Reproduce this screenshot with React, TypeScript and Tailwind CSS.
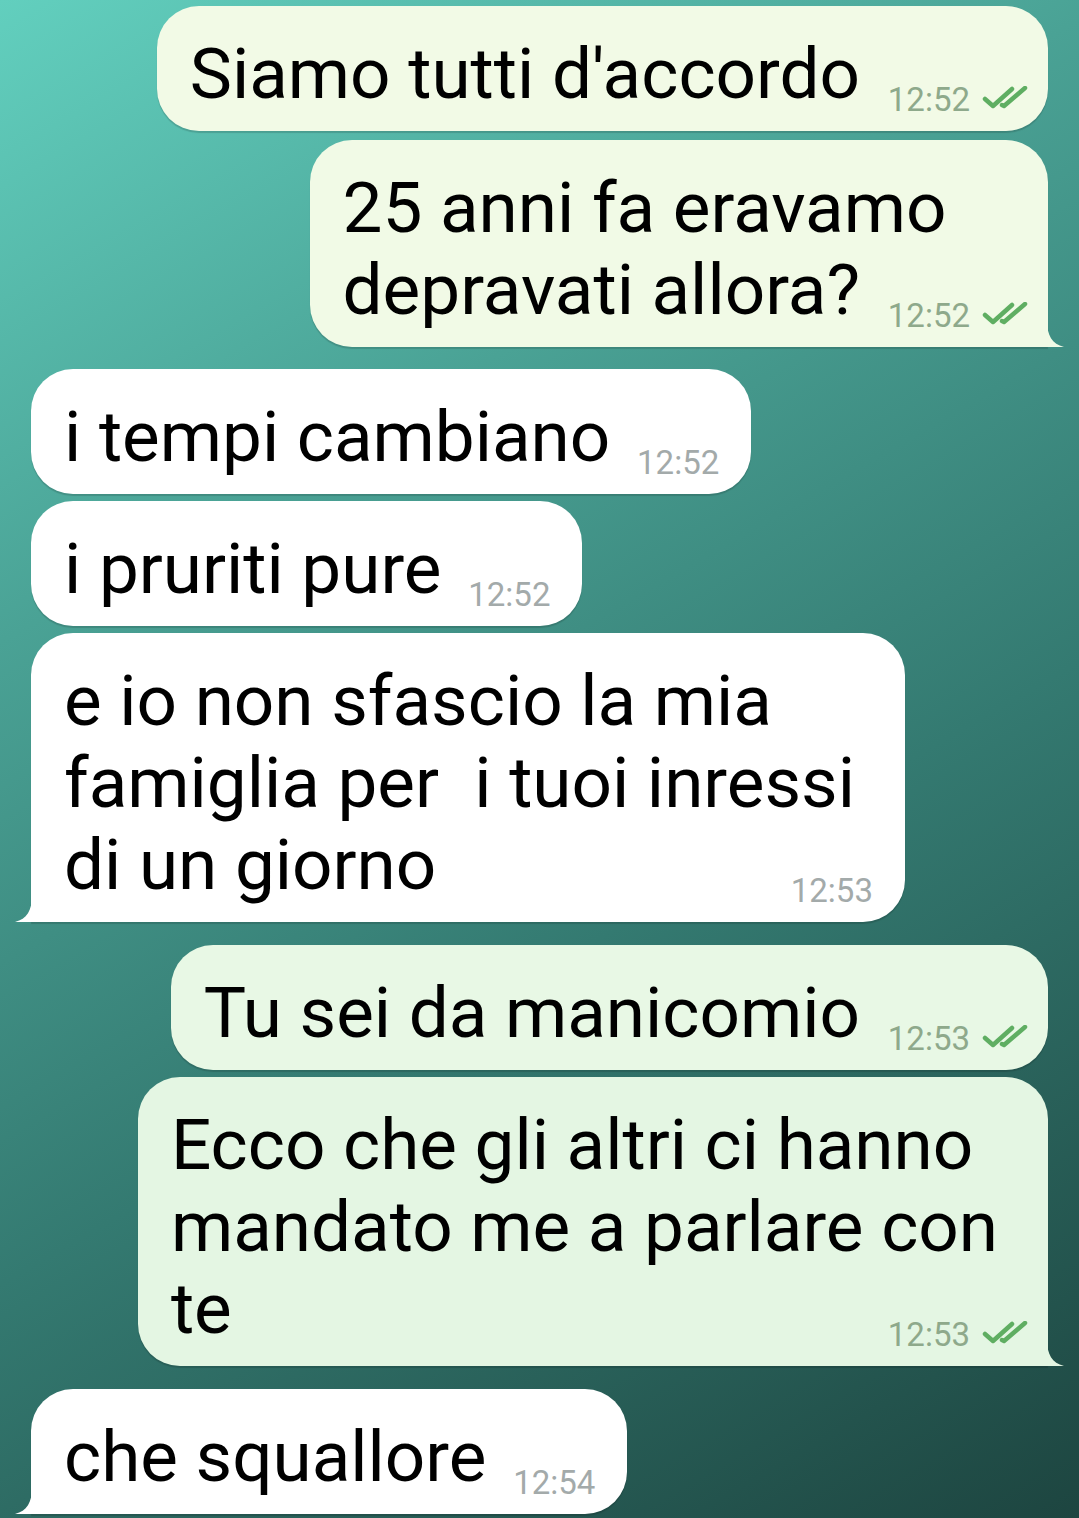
import React from "react"

type Msg = {
  lines: string[]
  time: string
  out: boolean
  tail?: boolean
  color: string
  bg: string
  mt: string
}

const messages: Msg[] = [
  { lines: ["Siamo tutti d'accordo"], time: "12:52", out: true, color: "#f2fae6", bg: "bg-[#f2fae6]", mt: "mt-[6px]" },
  { lines: ["25 anni fa eravamo", "depravati allora?"], time: "12:52", out: true, tail: true, color: "#f1fae6", bg: "bg-[#f1fae6]", mt: "mt-[9px]" },
  { lines: ["i tempi cambiano"], time: "12:52", out: false, color: "#ffffff", bg: "bg-white", mt: "mt-[22px]" },
  { lines: ["i pruriti pure"], time: "12:52", out: false, color: "#ffffff", bg: "bg-white", mt: "mt-[7px]" },
  { lines: ["e io non sfascio la mia", "famiglia per  i tuoi inressi", "di un giorno"], time: "12:53", out: false, tail: true, color: "#ffffff", bg: "bg-white", mt: "mt-[7px]" },
  { lines: ["Tu sei da manicomio"], time: "12:53", out: true, color: "#e8f8e5", bg: "bg-[#e8f8e5]", mt: "mt-[23px]" },
  { lines: ["Ecco che gli altri ci hanno", "mandato me a parlare con", "te"], time: "12:53", out: true, tail: true, color: "#e4f6e3", bg: "bg-[#e4f6e3]", mt: "mt-[7px]" },
  { lines: ["che squallore"], time: "12:54", out: false, tail: true, color: "#ffffff", bg: "bg-white", mt: "mt-[23px]" },
]

function Checks() {
  return (
    <svg width="46" height="24" viewBox="0 0 46 24" fill="none" className="mt-[-4px]">
      <path d="M3 13 L11 20 L30 3" stroke="#5fae62" strokeWidth="4.5" strokeLinecap="round" strokeLinejoin="round" />
      <path d="M20 19 L22 20 L43 2" stroke="#5fae62" strokeWidth="4.5" strokeLinecap="round" strokeLinejoin="round" />
    </svg>
  )
}

function Bubble({ m }: { m: Msg }) {
  const corner = m.tail ? (m.out ? "rounded-br-none" : "rounded-bl-none") : ""
  return (
    <div
      className={`relative w-fit rounded-[42px] ${corner} ${m.bg} ${m.mt} ${
        m.out ? "self-end" : "self-start"
      } pl-[33px] pr-[50px] pt-[27px] pb-[16px] shadow-[0_2px_1px_rgba(0,0,0,0.15)]`}
    >
      <p className="whitespace-pre text-[71px] leading-[82px] text-black">
        {m.lines.map((l, i) => (
          <React.Fragment key={i}>
            {l}
            {i < m.lines.length - 1 ? <br /> : null}
          </React.Fragment>
        ))}
        <span className={`inline-block ${m.out ? "w-[138px]" : "w-[91px]"}`} />
      </p>
      <div
        className={`absolute bottom-[15px] flex items-center gap-[12px] ${
          m.out ? "right-[20px]" : "right-[32px]"
        }`}
      >
        <span className={`text-[33px] leading-none ${m.out ? "text-[#8ea98b]" : "text-[#a3aaaa]"}`}>
          {m.time}
        </span>
        {m.out && <Checks />}
      </div>
      {m.tail && (
        <svg
          width="17"
          height="26"
          viewBox="0 0 17 26"
          className={`absolute bottom-0 ${m.out ? "right-[-16px]" : "left-[-16px] -scale-x-100"}`}
        >
          <path d="M0 0 C0 14 5 23 17 26 L0 26 Z" fill={m.color} />
        </svg>
      )}
    </div>
  )
}

export default function App() {
  return (
    <div
      className="h-[1518px] w-full overflow-hidden bg-[linear-gradient(150deg,#62cfbe_0%,#4aa295_30%,#347a71_60%,#1d4540_100%)] px-[31px]"
      style={{ fontFamily: "Roboto, 'Liberation Sans', sans-serif" }}
    >
      <div className="flex flex-col">
        {messages.map((m, i) => (
          <Bubble key={i} m={m} />
        ))}
      </div>
    </div>
  )
}
